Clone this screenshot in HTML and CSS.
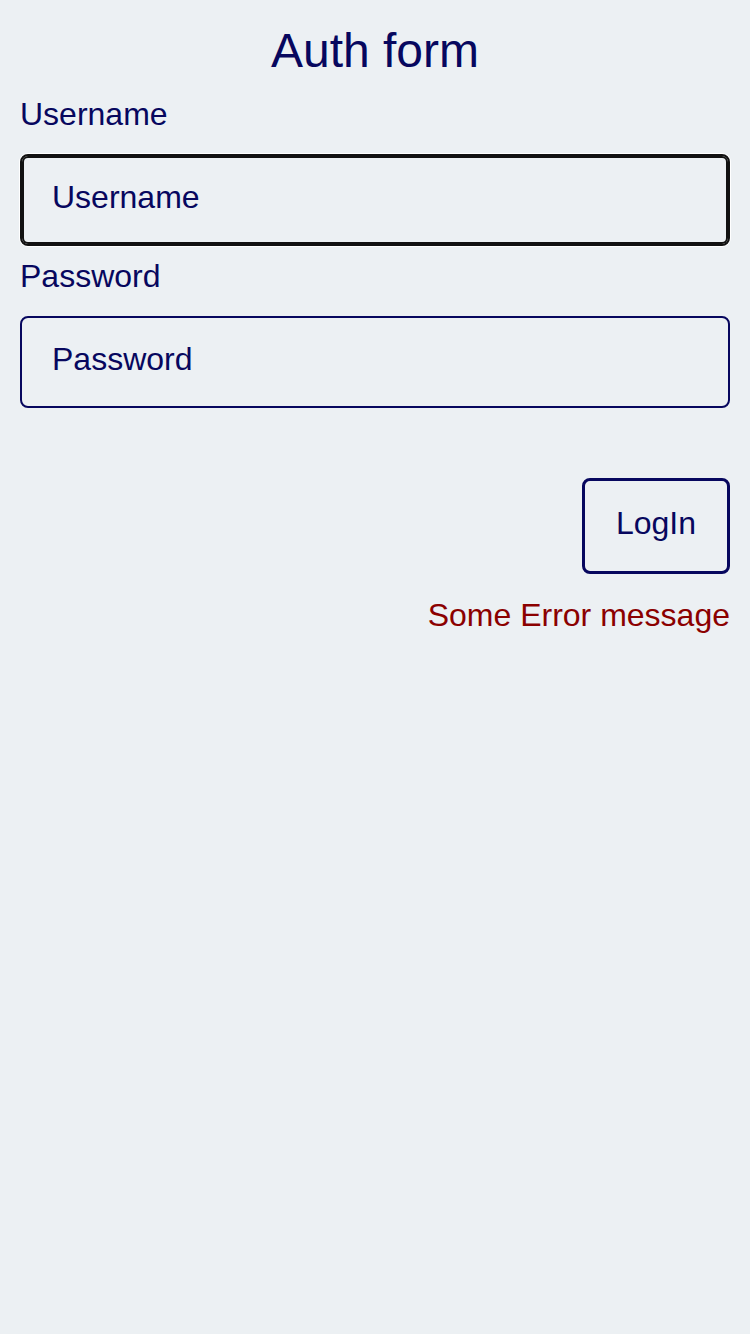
FILE: index.html
```html
<!DOCTYPE html>
<html lang="en">
<head>
<meta charset="utf-8">
<title>Auth form</title>
<link rel="stylesheet" href="styles.css">
</head>
<body>
<main class="page">
  <h1 class="title">Auth form</h1>
  <form class="form">
    <div class="field">
      <label class="field-label" for="username">Username</label>
      <input class="field-input is-focused" id="username" type="text" placeholder="Username">
    </div>
    <div class="field">
      <label class="field-label" for="password">Password</label>
      <input class="field-input" id="password" type="password" placeholder="Password">
    </div>
    <div class="actions">
      <button class="login-btn" type="button">LogIn</button>
      <p class="error">Some Error message</p>
    </div>
  </form>
</main>
</body>
</html>
```

FILE: styles.css
```css
html, body {
  margin: 0;
  padding: 0;
}

body {
  background: #ecf0f3;
  color: #07075e;
  font-family: "Liberation Sans", Arial, sans-serif;
  font-size: 32px;
  min-height: 1334px;
}

.page {
  padding: 0 20px;
}

.title {
  margin: 0 0 18px;
  padding-top: 23px;
  font-size: 48px;
  font-weight: normal;
  line-height: normal;
  text-align: center;
  color: #07075e;
}

.form {
  display: flex;
  flex-direction: column;
}

.field {
  display: flex;
  flex-direction: column;
  gap: 21px;
}

.field + .field {
  margin-top: 12px;
}

.field-label {
  display: block;
  font-size: 32px;
  line-height: normal;
  color: #07075e;
}

.field-input {
  box-sizing: border-box;
  width: 100%;
  height: 92px;
  margin: 0;
  padding: 0 30px 5px;
  border: 2px solid #07075e;
  border-radius: 8px;
  background: #ecf0f3;
  font-family: "Liberation Sans", Arial, sans-serif;
  font-size: 32px;
  color: #07075e;
  outline: none;
}

.field-input::placeholder {
  color: #07075e;
  opacity: 1;
}

.field-input.is-focused {
  border-color: #111111;
  box-shadow: inset 0 0 0 2px #111111, 0 0 0 1px #ffffff;
}

.actions {
  display: flex;
  flex-direction: column;
  align-items: flex-end;
  margin-top: 70px;
}

.login-btn {
  box-sizing: border-box;
  height: 96px;
  margin: 0;
  padding: 24px 31px 29px;
  border: 3px solid #07075e;
  border-radius: 8px;
  background: transparent;
  font-family: "Liberation Sans", Arial, sans-serif;
  font-size: 32px;
  line-height: 37px;
  color: #07075e;
}

.error {
  margin: 23px 0 0;
  font-size: 32px;
  line-height: normal;
  color: #8b0000;
}
```
